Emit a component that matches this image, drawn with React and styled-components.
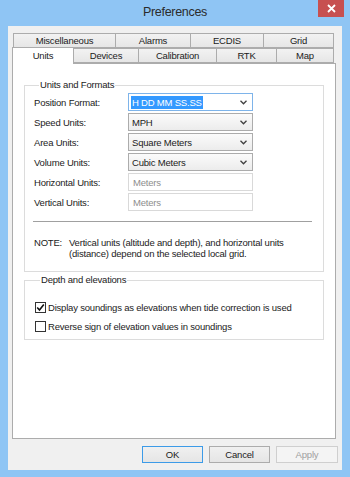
import React from 'react';
import styled, { createGlobalStyle } from 'styled-components';

const GlobalStyle = createGlobalStyle`
  html, body {
    margin: 0;
    padding: 0;
    background: #8fc5f4;
  }
  body {
    font-family: "Liberation Sans", Arial, sans-serif;
    font-size: 9.5px;
    letter-spacing: -0.2px;
    color: #1b1b1b;
  }
`;

const Frame = styled.div`
  width: 350px;
  height: 477px;
  box-sizing: border-box;
  background: #8fc5f4;
  display: flex;
  flex-direction: column;
  padding: 0 8px 7px 8px;
`;

const TitleBar = styled.div`
  height: 26px;
  display: grid;
  grid-template-columns: 1fr auto 1fr;
  align-items: start;
`;

const Title = styled.div`
  grid-column: 2;
  padding-top: 5px;
  font-size: 12.5px;
  letter-spacing: -0.3px;
  color: #2b2b2b;
`;

const CloseButton = styled.div`
  grid-column: 3;
  justify-self: end;
  width: 26px;
  height: 17px;
  margin-right: -2px;
  background: #c75050;
  display: flex;
  align-items: center;
  justify-content: center;
`;

const Client = styled.div`
  flex: 1;
  background: #f0f0f0;
  display: flex;
  flex-direction: column;
  padding: 7px 6px 7px 4px;
`;

const TabRow = styled.div`
  display: flex;
  height: 15px;
  padding-left: ${p => p.$offset || 0}px;
  align-items: flex-end;
`;

const Tab = styled.div`
  box-sizing: border-box;
  width: ${p => p.$w}px;
  height: ${p => (p.$active ? 17 : 15)}px;
  margin-left: ${p => (p.$first ? 0 : -1)}px;
  border: 1px solid #acacac;
  border-bottom: ${p => (p.$active ? 'none' : '1px solid #acacac')};
  background: ${p => (p.$active ? '#fff' : 'linear-gradient(#f2f2f2, #e6e6e6)')};
  display: flex;
  justify-content: center;
  align-items: ${p => (p.$active ? 'flex-start' : 'center')};
  padding-top: ${p => (p.$active ? 2 : 0)}px;
  position: relative;
  z-index: ${p => (p.$active ? 2 : 1)};
  margin-bottom: ${p => (p.$active ? -1 : 0)}px;
  color: #1b1b1b;
`;

const Panel = styled.div`
  flex: 1;
  background: #fff;
  border: 1px solid #acacac;
  display: flex;
  flex-direction: column;
  gap: 2px;
  padding: 15px 11px 0 11px;
`;

const Group = styled.fieldset`
  margin: 0;
  border: 1px solid #dcdcdc;
  border-radius: 0;
  padding: ${p => p.$pad};
  height: ${p => p.$h}px;
  box-sizing: border-box;
  display: flex;
  flex-direction: column;
`;

const Legend = styled.legend`
  padding: 0 1px;
  margin-left: 5px;
  line-height: 12px;
`;

const FieldRow = styled.div`
  display: flex;
  align-items: center;
  height: 20px;
`;

const Label = styled.div`
  width: 94px;
`;

const Select = styled.div`
  box-sizing: border-box;
  width: 125px;
  height: 18px;
  border: 1px solid ${p => (p.$focus ? '#7eb4ea' : '#acacac')};
  background: ${p => (p.$focus ? '#fff' : 'linear-gradient(#fbfbfb, #ececec)')};
  display: flex;
  align-items: center;
  justify-content: space-between;
  padding: 0 5px 0 2px;
`;

const Selected = styled.span`
  background: #3399ff;
  color: #fff;
  padding: 1px 1px;
`;

const Value = styled.span`
  padding-left: 1px;
`;

const TextBox = styled.div`
  box-sizing: border-box;
  width: 125px;
  height: 18px;
  border: 1px solid #d9d9d9;
  background: #fff;
  display: flex;
  align-items: center;
  padding-left: 4px;
  color: #8d8d8d;
`;

const Separator = styled.div`
  height: 1px;
  background: #a0a0a0;
  margin: 9px 11px 0 -1px;
`;

const Note = styled.div`
  display: flex;
  margin-top: 15px;
  line-height: 11px;
`;

const NoteTag = styled.div`
  width: 35px;
  flex-shrink: 0;
`;

const CheckRow = styled.label`
  display: flex;
  align-items: center;
  gap: 2px;
  height: 19px;
`;

const Box = styled.span`
  box-sizing: border-box;
  width: 11px;
  height: 11px;
  border: 1px solid #333;
  background: #fff;
  display: inline-flex;
  align-items: center;
  justify-content: center;
`;

const ButtonRow = styled.div`
  display: flex;
  justify-content: flex-end;
  gap: 6px;
  margin-top: 7px;
  margin-right: -2px;
`;

const Button = styled.div`
  box-sizing: border-box;
  width: ${p => p.$w || 61}px;
  height: 17px;
  border: 1px solid ${p => (p.$default ? '#3c9be8' : p.$disabled ? '#cfcfcf' : '#acacac')};
  background: ${p => (p.$disabled ? '#f4f4f4' : 'linear-gradient(#f0f0f0, #e5e5e5)')};
  color: ${p => (p.$disabled ? '#a0a0a0' : '#1b1b1b')};
  display: flex;
  align-items: center;
  justify-content: center;
`;

const Chevron = () => (
  <svg width="7" height="5" viewBox="0 0 7 5">
    <path d="M0.5 0.8 L3.5 3.8 L6.5 0.8" fill="none" stroke="#404040" strokeWidth="1.3" />
  </svg>
);

const Check = () => (
  <svg width="9" height="9" viewBox="0 0 9 9">
    <path d="M1.2 4.5 L3.5 7 L7.8 1.5" fill="none" stroke="#111" strokeWidth="1.6" />
  </svg>
);

const backTabs = [
  { name: 'Miscellaneous', w: 103 },
  { name: 'Alarms', w: 76 },
  { name: 'ECDIS', w: 74 },
  { name: 'Grid', w: 71 },
];

const frontTabs = [
  { name: 'Units', w: 62, active: true },
  { name: 'Devices', w: 66 },
  { name: 'Calibration', w: 79 },
  { name: 'RTK', w: 61 },
  { name: 'Map', w: 58 },
];

export default function App() {
  return (
    <>
      <GlobalStyle />
      <Frame>
        <TitleBar>
          <Title>Preferences</Title>
          <CloseButton>
            <svg width="9" height="9" viewBox="0 0 9 9">
              <path d="M1 1 L8 8 M8 1 L1 8" stroke="#fff" strokeWidth="1.8" />
            </svg>
          </CloseButton>
        </TitleBar>
        <Client>
          <TabRow $offset={1}>
            {backTabs.map((t, i) => (
              <Tab key={t.name} $w={t.w} $first={i === 0}>{t.name}</Tab>
            ))}
          </TabRow>
          <TabRow>
            {frontTabs.map((t, i) => (
              <Tab key={t.name} $w={t.w} $first={i === 0} $active={t.active}>{t.name}</Tab>
            ))}
          </TabRow>
          <Panel>
            <Group $h={193} $pad="1px 0 0 9px">
              <Legend>Units and Formats</Legend>
              <FieldRow>
                <Label>Position Format:</Label>
                <Select $focus>
                  <Selected>H DD MM SS.SS</Selected>
                  <Chevron />
                </Select>
              </FieldRow>
              <FieldRow>
                <Label>Speed Units:</Label>
                <Select><Value>MPH</Value><Chevron /></Select>
              </FieldRow>
              <FieldRow>
                <Label>Area Units:</Label>
                <Select><Value>Square Meters</Value><Chevron /></Select>
              </FieldRow>
              <FieldRow>
                <Label>Volume Units:</Label>
                <Select><Value>Cubic Meters</Value><Chevron /></Select>
              </FieldRow>
              <FieldRow>
                <Label>Horizontal Units:</Label>
                <TextBox>Meters</TextBox>
              </FieldRow>
              <FieldRow>
                <Label>Vertical Units:</Label>
                <TextBox>Meters</TextBox>
              </FieldRow>
              <Separator />
              <Note>
                <NoteTag>NOTE:</NoteTag>
                <div>
                  Vertical units (altitude and depth), and horizontal units
                  <br />
                  (distance) depend on the selected local grid.
                </div>
              </Note>
            </Group>
            <Group $h={66} $pad="12px 0 0 10px">
              <Legend>Depth and elevations</Legend>
              <CheckRow>
                <Box><Check /></Box>
                Display soundings as elevations when tide correction is used
              </CheckRow>
              <CheckRow>
                <Box />
                Reverse sign of elevation values in soundings
              </CheckRow>
            </Group>
          </Panel>
          <ButtonRow>
            <Button $default>OK</Button>
            <Button>Cancel</Button>
            <Button $disabled $w={62}>Apply</Button>
          </ButtonRow>
        </Client>
      </Frame>
    </>
  );
}
